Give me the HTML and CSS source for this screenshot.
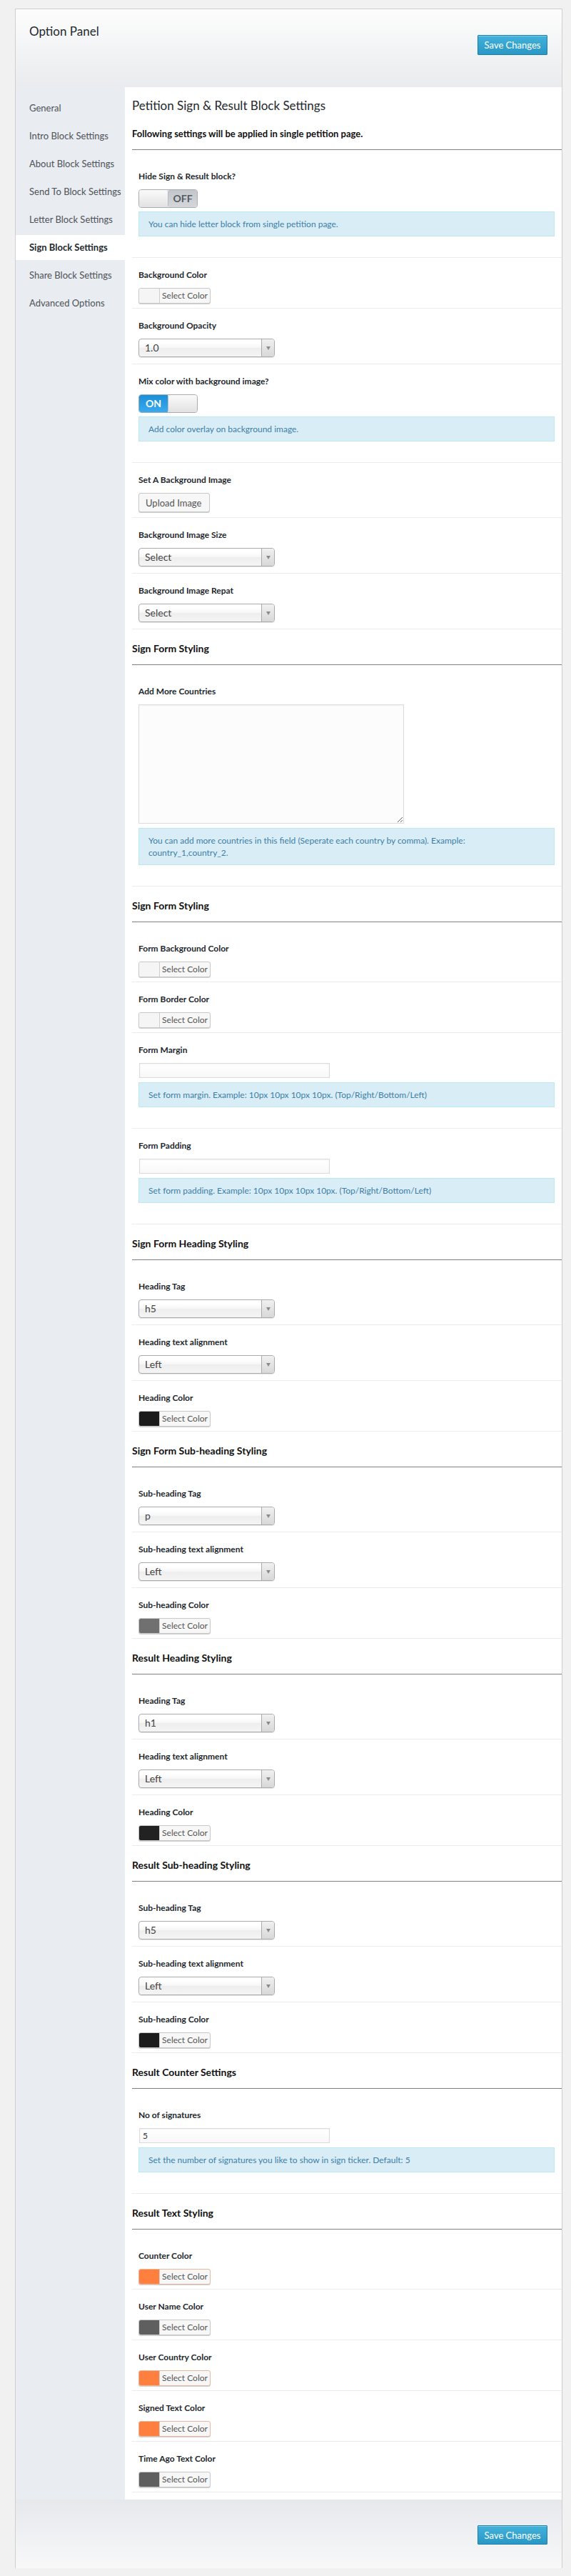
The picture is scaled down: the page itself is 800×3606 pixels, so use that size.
FILE: index.html
```html
<!DOCTYPE html>
<html lang="en">
<head>
<meta charset="utf-8">
<title>Option Panel</title>
<link rel="stylesheet" href="styles.css">
</head>
<body>
<div class="panel">
  <header class="panel-header">
    <h1 class="panel-title">Option Panel</h1>
    <button class="btn-primary">Save Changes</button>
  </header>
  <div class="panel-body">
    <nav class="sidebar">
      <a class="nav-item">General</a>
      <a class="nav-item">Intro Block Settings</a>
      <a class="nav-item">About Block Settings</a>
      <a class="nav-item">Send To Block Settings</a>
      <a class="nav-item">Letter Block Settings</a>
      <a class="nav-item active">Sign Block Settings</a>
      <a class="nav-item">Share Block Settings</a>
      <a class="nav-item">Advanced Options</a>
    </nav>
    <main class="content">
      <div class="page-head">
        <h2 class="page-title">Petition Sign &amp; Result Block Settings</h2>
        <p class="page-sub">Following settings will be applied in single petition page.</p>
      </div>

      <div class="group">
        <div class="row">
          <div class="label">Hide Sign &amp; Result block?</div>
          <div class="toggle"><span class="knob"></span><span class="toggle-off">OFF</span></div>
          <div class="info">You can hide letter block from single petition page.</div>
        </div>
        <div class="row">
          <div class="label">Background Color</div>
          <div class="color-btn"><span class="swatch"></span><span class="color-text">Select Color</span></div>
        </div>
        <div class="row">
          <div class="label">Background Opacity</div>
          <div class="select"><span class="select-value">1.0</span><span class="select-arrow"><i class="caret"></i></span></div>
        </div>
        <div class="row">
          <div class="label">Mix color with background image?</div>
          <div class="toggle"><span class="toggle-on">ON</span><span class="knob knob-right"></span></div>
          <div class="info">Add color overlay on background image.</div>
        </div>
        <div class="row">
          <div class="label">Set A Background Image</div>
          <button class="upload-btn">Upload Image</button>
        </div>
        <div class="row">
          <div class="label">Background Image Size</div>
          <div class="select"><span class="select-value">Select</span><span class="select-arrow"><i class="caret"></i></span></div>
        </div>
        <div class="row">
          <div class="label">Background Image Repat</div>
          <div class="select"><span class="select-value">Select</span><span class="select-arrow"><i class="caret"></i></span></div>
        </div>
      </div>

      <h3 class="section-head">Sign Form Styling</h3>
      <div class="group">
        <div class="row">
          <div class="label">Add More Countries</div>
          <textarea class="textarea"></textarea>
          <div class="info">You can add more countries in this field (Seperate each country by comma). Example:<br>country_1,country_2.</div>
        </div>
      </div>

      <h3 class="section-head">Sign Form Styling</h3>
      <div class="group">
        <div class="row">
          <div class="label">Form Background Color</div>
          <div class="color-btn"><span class="swatch"></span><span class="color-text">Select Color</span></div>
        </div>
        <div class="row">
          <div class="label">Form Border Color</div>
          <div class="color-btn"><span class="swatch"></span><span class="color-text">Select Color</span></div>
        </div>
        <div class="row">
          <div class="label">Form Margin</div>
          <input class="text-input" type="text" value="">
          <div class="info">Set form margin. Example: 10px 10px 10px 10px. (Top/Right/Bottom/Left)</div>
        </div>
        <div class="row">
          <div class="label">Form Padding</div>
          <input class="text-input" type="text" value="">
          <div class="info">Set form padding. Example: 10px 10px 10px 10px. (Top/Right/Bottom/Left)</div>
        </div>
      </div>

      <h3 class="section-head">Sign Form Heading Styling</h3>
      <div class="group">
        <div class="row">
          <div class="label">Heading Tag</div>
          <div class="select"><span class="select-value">h5</span><span class="select-arrow"><i class="caret"></i></span></div>
        </div>
        <div class="row">
          <div class="label">Heading text alignment</div>
          <div class="select"><span class="select-value">Left</span><span class="select-arrow"><i class="caret"></i></span></div>
        </div>
        <div class="row">
          <div class="label">Heading Color</div>
          <div class="color-btn"><span class="swatch swatch-black"></span><span class="color-text">Select Color</span></div>
        </div>
      </div>

      <h3 class="section-head">Sign Form Sub-heading Styling</h3>
      <div class="group">
        <div class="row">
          <div class="label">Sub-heading Tag</div>
          <div class="select"><span class="select-value">p</span><span class="select-arrow"><i class="caret"></i></span></div>
        </div>
        <div class="row">
          <div class="label">Sub-heading text alignment</div>
          <div class="select"><span class="select-value">Left</span><span class="select-arrow"><i class="caret"></i></span></div>
        </div>
        <div class="row">
          <div class="label">Sub-heading Color</div>
          <div class="color-btn"><span class="swatch swatch-gray"></span><span class="color-text">Select Color</span></div>
        </div>
      </div>

      <h3 class="section-head">Result Heading Styling</h3>
      <div class="group">
        <div class="row">
          <div class="label">Heading Tag</div>
          <div class="select"><span class="select-value">h1</span><span class="select-arrow"><i class="caret"></i></span></div>
        </div>
        <div class="row">
          <div class="label">Heading text alignment</div>
          <div class="select"><span class="select-value">Left</span><span class="select-arrow"><i class="caret"></i></span></div>
        </div>
        <div class="row">
          <div class="label">Heading Color</div>
          <div class="color-btn"><span class="swatch swatch-dark"></span><span class="color-text">Select Color</span></div>
        </div>
      </div>

      <h3 class="section-head">Result Sub-heading Styling</h3>
      <div class="group">
        <div class="row">
          <div class="label">Sub-heading Tag</div>
          <div class="select"><span class="select-value">h5</span><span class="select-arrow"><i class="caret"></i></span></div>
        </div>
        <div class="row">
          <div class="label">Sub-heading text alignment</div>
          <div class="select"><span class="select-value">Left</span><span class="select-arrow"><i class="caret"></i></span></div>
        </div>
        <div class="row">
          <div class="label">Sub-heading Color</div>
          <div class="color-btn"><span class="swatch swatch-black"></span><span class="color-text">Select Color</span></div>
        </div>
      </div>

      <h3 class="section-head">Result Counter Settings</h3>
      <div class="group">
        <div class="row">
          <div class="label">No of signatures</div>
          <input class="text-input" type="text" value="5">
          <div class="info">Set the number of signatures you like to show in sign ticker. Default: 5</div>
        </div>
      </div>

      <h3 class="section-head">Result Text Styling</h3>
      <div class="group">
        <div class="row">
          <div class="label">Counter Color</div>
          <div class="color-btn color-btn-orange"><span class="swatch swatch-orange"></span><span class="color-text">Select Color</span></div>
        </div>
        <div class="row">
          <div class="label">User Name Color</div>
          <div class="color-btn"><span class="swatch swatch-mid"></span><span class="color-text">Select Color</span></div>
        </div>
        <div class="row">
          <div class="label">User Country Color</div>
          <div class="color-btn color-btn-orange"><span class="swatch swatch-orange"></span><span class="color-text">Select Color</span></div>
        </div>
        <div class="row">
          <div class="label">Signed Text Color</div>
          <div class="color-btn color-btn-orange"><span class="swatch swatch-orange"></span><span class="color-text">Select Color</span></div>
        </div>
        <div class="row">
          <div class="label">Time Ago Text Color</div>
          <div class="color-btn"><span class="swatch swatch-mid"></span><span class="color-text">Select Color</span></div>
        </div>
      </div>
    </main>
  </div>
  <footer class="panel-footer">
    <button class="btn-primary">Save Changes</button>
  </footer>
</div>
</body>
</html>
```

FILE: styles.css
```css
* { box-sizing: border-box; }

body {
  margin: 0;
  background: #f1f1f1;
  font-family: Lato, "Open Sans", sans-serif;
  color: #23282d;
}

.panel {
  margin: 12px 12px 0 21px;
  border: 1px solid #cfcfcf;
  border-bottom: 0;
  background: #fff;
}

.panel-header {
  height: 109px;
  padding: 21px 20px 0 19px;
  display: flex;
  justify-content: space-between;
  align-items: flex-start;
  background: linear-gradient(#fdfdfd, #e9ebee);
}

.panel-title {
  margin: 0;
  font-size: 17px;
  line-height: 20px;
  font-weight: 400;
  color: #23282d;
}

.btn-primary {
  margin-top: 15px;
  width: 98px;
  height: 28px;
  padding: 0;
  border: 1px solid #1b7fae;
  border-radius: 1px;
  background: linear-gradient(#41b2dc, #2a97c4);
  box-shadow: inset 0 1px 0 rgba(150, 215, 240, 0.7);
  color: #fff;
  font-family: Lato, "Open Sans", sans-serif;
  font-size: 13px;
  cursor: pointer;
}

.panel-body {
  display: flex;
}

.sidebar {
  width: 153px;
  flex: none;
  background: #e9ecf0;
  padding-top: 12px;
}

.nav-item {
  display: block;
  height: 35px;
  line-height: 35px;
  margin-bottom: 4px;
  padding-left: 19px;
  font-size: 13px;
  color: #4d5359;
}

.nav-item.active {
  background: #fff;
  font-weight: 700;
  color: #23282d;
}

.content {
  flex: 1;
  min-width: 0;
  padding: 0 0 10px 10px;
  background: #fff;
}

.page-head {
  padding: 15px 0 13px;
  border-bottom: 1px solid #7f7f7f;
}

.page-title {
  margin: 0 0 19px;
  font-size: 17px;
  line-height: 22px;
  font-weight: 400;
  color: #23282d;
}

.page-sub {
  margin: 0;
  font-size: 13px;
  line-height: 18px;
  font-weight: 700;
  color: #111;
}

.group {
  padding-top: 13px;
}

.row {
  padding: 15px 10px 6px 9px;
  border-bottom: 1px solid #ececec;
}

.label {
  font-size: 12px;
  line-height: 18px;
  font-weight: 700;
  color: #23282d;
  margin-bottom: 9px;
}

.section-head {
  margin: 0;
  padding: 17px 0 12px;
  border-bottom: 1px solid #7f7f7f;
  font-size: 14px;
  line-height: 20px;
  font-weight: 700;
  color: #111;
}

/* toggle switch */
.toggle {
  display: flex;
  width: 83px;
  height: 26px;
  border: 1px solid #a8adb2;
  border-radius: 4px;
  overflow: hidden;
  margin-bottom: 5px;
}

.knob {
  width: 41px;
  background: linear-gradient(#fafafa, #e2e2e2);
  border-right: 1px solid #b8bcc0;
  border-radius: 3px;
}

.knob-right {
  border-right: 0;
  border-left: 1px solid #b8bcc0;
}

.toggle-off {
  flex: 1;
  background: linear-gradient(#c2c6ca, #d4d7da);
  color: #555a5f;
  font-size: 14px;
  font-weight: 700;
  line-height: 24px;
  text-align: center;
}

.toggle-on {
  flex: 1;
  background: linear-gradient(#1b8fd8, #3aaaee);
  color: #fff;
  font-size: 14px;
  font-weight: 700;
  line-height: 24px;
  text-align: center;
}

/* info box */
.info {
  background: #d9edf7;
  border: 1px solid #bce8f1;
  padding: 8px 13px;
  font-size: 12px;
  line-height: 17px;
  color: #3d7ea6;
  margin-bottom: 23px;
}

/* color picker */
.color-btn {
  display: inline-flex;
  vertical-align: top;
  height: 22px;
  border: 1px solid #c8c8c8;
  border-radius: 3px;
  background: #f7f7f7;
  box-shadow: 0 1px 0 #cfcfcf;
  overflow: hidden;
}

.color-btn-orange {
  border-color: #e9b89d;
}

.swatch {
  width: 29px;
  border-right: 1px solid #cfcfcf;
  background: #f5f5f5;
}

.swatch-black { background: #1b1b1b; }
.swatch-dark { background: #222; }
.swatch-gray { background: #707070; }
.swatch-mid { background: #5f5f5f; }
.swatch-orange { background: #ff7f3e; }

.color-text {
  width: 70px;
  text-align: center;
  font-size: 12px;
  line-height: 20px;
  color: #555;
}

/* chosen-style select */
.select {
  display: flex;
  width: 191px;
  height: 26px;
  border: 1px solid #aaa;
  border-radius: 4px;
  background: linear-gradient(#fff 20%, #f6f6f6 50%, #eee 52%, #f4f4f4);
  box-shadow: 0 1px 1px rgba(0, 0, 0, 0.1);
  overflow: hidden;
  margin-bottom: 3px;
}

.select-value {
  flex: 1;
  padding-left: 8px;
  font-size: 14px;
  line-height: 24px;
  color: #444;
}

.select-arrow {
  width: 18px;
  display: flex;
  align-items: center;
  justify-content: center;
  border-left: 1px solid #aaa;
  background: linear-gradient(#f0f0f0, #d8d8d8);
}

.caret {
  width: 0;
  height: 0;
  border-left: 3px solid transparent;
  border-right: 3px solid transparent;
  border-top: 5px solid #8a8a8a;
}

/* upload */
.upload-btn {
  display: block;
  width: 100px;
  height: 27px;
  padding: 0 0 0 9px;
  text-align: left;
  border: 1px solid #c8c8c8;
  border-radius: 3px;
  background: #f7f7f7;
  box-shadow: 0 1px 0 #cfcfcf;
  font-family: Lato, "Open Sans", sans-serif;
  font-size: 13px;
  color: #555;
  margin-bottom: 1px;
}

/* text input */
.text-input {
  display: block;
  width: 267px;
  height: 21px;
  margin: 0 0 6px 1px;
  padding: 0 4px;
  border: 1px solid #dcdcdc;
  background: linear-gradient(#fff, #f8f8f8);
  box-shadow: inset 0 1px 2px rgba(0, 0, 0, 0.06);
  font-family: Lato, "Open Sans", sans-serif;
  font-size: 12px;
  color: #333;
}

.textarea {
  display: block;
  width: 372px;
  height: 167px;
  margin: 0 0 6px;
  border: 1px solid #dcdcdc;
  background: #fcfcfc;
  box-shadow: inset 0 1px 2px rgba(0, 0, 0, 0.05);
  resize: vertical;
}

.panel-footer {
  height: 96px;
  padding: 36px 20px 0 0;
  display: flex;
  justify-content: flex-end;
  align-items: flex-start;
  background: linear-gradient(#e6e8ec, #f8f8f9);
}

.panel-footer .btn-primary {
  margin-top: 0;
  height: 27px;
}
```
